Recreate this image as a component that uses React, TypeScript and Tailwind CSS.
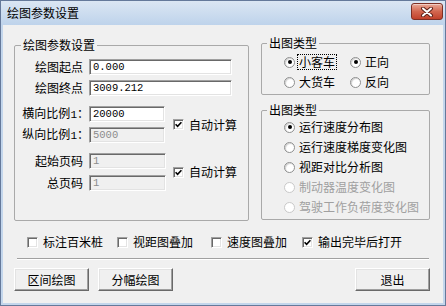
import React from "react";

type CheckProps = { checked?: boolean; label: string; className?: string };

function Check({ checked, label, className = "" }: CheckProps) {
  return (
    <div className={`flex items-center ${className}`}>
      <span className="w-[11px] h-[11px] shrink-0 bg-white border border-t-[#a0a0a0] border-l-[#a0a0a0] border-b-white border-r-white shadow-[inset_1px_1px_0_#696969,inset_-1px_-1px_0_#e3e3e3] flex items-center justify-center">
        {checked && (
          <svg width="7" height="7" viewBox="0 0 7 7">
            <path d="M0.6 3.2 L2.6 5.3 L6.4 1.2" stroke="#000" strokeWidth="1.6" fill="none" />
          </svg>
        )}
      </span>
      <span className="ml-[5px] text-[12px] leading-[14px] whitespace-nowrap">{label}</span>
    </div>
  );
}

type RadioProps = { checked?: boolean; disabled?: boolean; focus?: boolean; label: string; className?: string };

function Radio({ checked, disabled, focus, label, className = "" }: RadioProps) {
  return (
    <div className={`flex items-center h-[20px] ${className}`}>
      <span
        className={`w-[11px] h-[11px] shrink-0 rounded-full border bg-white flex items-center justify-center ${
          disabled ? "border-[#c9c9c9]" : "border-[#8e8f8f] shadow-[inset_1px_1px_1px_rgba(0,0,0,0.18)]"
        }`}
      >
        {checked && <span className="w-[4px] h-[4px] rounded-full bg-black" />}
      </span>
      <span
        className={`ml-[2px] px-[1px] border text-[12px] leading-[14px] whitespace-nowrap ${
          focus ? "border-dotted border-black" : "border-transparent"
        } ${disabled ? "text-[#a0a0a0]" : "text-black"}`}
      >
        {label}
      </span>
    </div>
  );
}

type EditProps = { value: string; width: string; disabled?: boolean };

function Edit({ value, width, disabled }: EditProps) {
  return (
    <div
      className={`h-[16px] ${width} flex items-center pl-[3px] border border-t-[#a0a0a0] border-l-[#a0a0a0] border-b-white border-r-white shadow-[inset_1px_1px_0_#696969,inset_-1px_-1px_0_#e3e3e3] ${
        disabled ? "bg-[#f0f0f0] text-[#8c8c8c]" : "bg-white text-black"
      }`}
    >
      <span className="font-['Liberation_Mono',monospace] text-[10.5px] leading-none">{value}</span>
    </div>
  );
}

function Label({ children, tight }: { children: React.ReactNode; tight?: boolean }) {
  return (
    <div className={`w-[74px] text-right text-[12px] leading-[14px] whitespace-nowrap ${tight ? "pr-0" : "pr-[6px]"}`}>
      {children}
    </div>
  );
}

function Btn({ label, className = "" }: { label: string; className?: string }) {
  return (
    <button className={`w-[75px] h-[23px] bg-[#f0f0f0] border border-t-white border-l-white border-b-[#696969] border-r-[#696969] shadow-[inset_-1px_-1px_0_#a0a0a0,inset_1px_1px_0_#e3e3e3] text-[12px] leading-[14px] ${className}`}>
      {label}
    </button>
  );
}

export default function App() {
  return (
    <div className="w-[446px] h-[306px] border border-[#65799a] bg-[#c3d6ec] flex flex-col font-['Noto_Sans_CJK_SC',sans-serif] text-black select-none">
      {/* title bar */}
      <div className="h-[24px] flex items-center justify-between pl-[6px] pr-[2px] bg-gradient-to-b from-[#dbe6f3] to-[#bed3eb]">
        <span className="text-[12px] leading-[14px]">绘图参数设置</span>
        <div className="w-[32px] h-[17px] -mt-[3px] rounded-[3px] border border-[#7d2f24] bg-gradient-to-b from-[#e9a897] via-[#d2664f] to-[#c1412b] shadow-[inset_0_1px_0_rgba(255,255,255,0.45)] flex items-center justify-center">
          <svg width="14" height="10" viewBox="0 0 14 10">
            <path d="M3 1.5 L11 8.5 M11 1.5 L3 8.5" stroke="#5e2219" strokeWidth="4" strokeLinecap="round" />
            <path d="M3 1.5 L11 8.5 M11 1.5 L3 8.5" stroke="#fff" strokeWidth="2" strokeLinecap="round" />
          </svg>
        </div>
      </div>

      {/* client */}
      <div className="flex-1 mx-[2px] mb-[2px] bg-[#f0f0f0] pl-[11px] pr-[13px] flex flex-col">
        <div className="flex items-start gap-[12px] mt-[11px]">
          {/* left group */}
          <fieldset className="w-[235px] h-[183px] mt-[2px] border border-[#a9a9a9] rounded-[2px] flex flex-col pt-[7px]">
            <legend className="ml-[6px] px-[2px] text-[12px] leading-[14px]">绘图参数设置</legend>
            <div className="flex items-center">
              <Label>绘图起点</Label>
              <Edit value="0.000" width="w-[143px]" />
            </div>
            <div className="flex items-center mt-[5px]">
              <Label>绘图终点</Label>
              <Edit value="3009.212" width="w-[143px]" />
            </div>

            <div className="flex items-center mt-[10px]">
              <div className="flex flex-col gap-[5px]">
                <div className="flex items-center">
                  <Label tight>
                    横向比例<span className="font-['Liberation_Mono',monospace] text-[11px]">1</span>：
                  </Label>
                  <Edit value="20000" width="w-[76px]" />
                </div>
                <div className="flex items-center">
                  <Label tight>
                    纵向比例<span className="font-['Liberation_Mono',monospace] text-[11px]">1</span>：
                  </Label>
                  <Edit value="5000" width="w-[76px]" disabled />
                </div>
              </div>
              <Check checked label="自动计算" className="ml-[8px]" />
            </div>

            <div className="flex items-center mt-[10px]">
              <div className="flex flex-col gap-[6px]">
                <div className="flex items-center">
                  <Label>起始页码</Label>
                  <Edit value="1" width="w-[77px]" disabled />
                </div>
                <div className="flex items-center">
                  <Label>总页码</Label>
                  <Edit value="1" width="w-[77px]" disabled />
                </div>
              </div>
              <Check checked label="自动计算" className="ml-[7px]" />
            </div>
          </fieldset>

          {/* right column */}
          <div className="w-[169px] flex flex-col">
            <fieldset className="border border-[#a9a9a9] rounded-[2px] pt-[2px] pb-[2px]">
              <legend className="ml-[5px] px-[2px] text-[12px] leading-[14px]">出图类型</legend>
              <div className="pl-[22px] flex flex-col">
                <div className="flex">
                  <Radio checked focus label="小客车" className="w-[66px]" />
                  <Radio checked label="正向" />
                </div>
                <div className="flex">
                  <Radio label="大货车" className="w-[66px]" />
                  <Radio label="反向" />
                </div>
              </div>
            </fieldset>

            <fieldset className="mt-[8px] border border-[#a9a9a9] rounded-[2px] pb-[2px]">
              <legend className="ml-[5px] px-[2px] text-[12px] leading-[14px]">出图类型</legend>
              <div className="pl-[22px] flex flex-col">
                <Radio checked label="运行速度分布图" />
                <Radio label="运行速度梯度变化图" />
                <Radio label="视距对比分析图" />
                <Radio disabled label="制动器温度变化图" />
                <Radio disabled label="驾驶工作负荷度变化图" />
              </div>
            </fieldset>
          </div>
        </div>

        {/* options row */}
        <div className="h-[16px] mt-[13px] pl-[13px] flex items-center">
          <Check label="标注百米桩" className="w-[90px]" />
          <Check label="视距图叠加" className="w-[94px]" />
          <Check label="速度图叠加" className="w-[91px]" />
          <Check checked label="输出完毕后打开" />
        </div>

        <div className="mt-[8px] ml-[3px] mr-[1px] border-t border-b border-t-[#a0a0a0] border-b-white" />

        <div className="mt-[8px] flex items-center">
          <Btn label="区间绘图" />
          <Btn label="分幅绘图" className="ml-[9px]" />
          <Btn label="退出" className="ml-auto" />
        </div>
      </div>
    </div>
  );
}
